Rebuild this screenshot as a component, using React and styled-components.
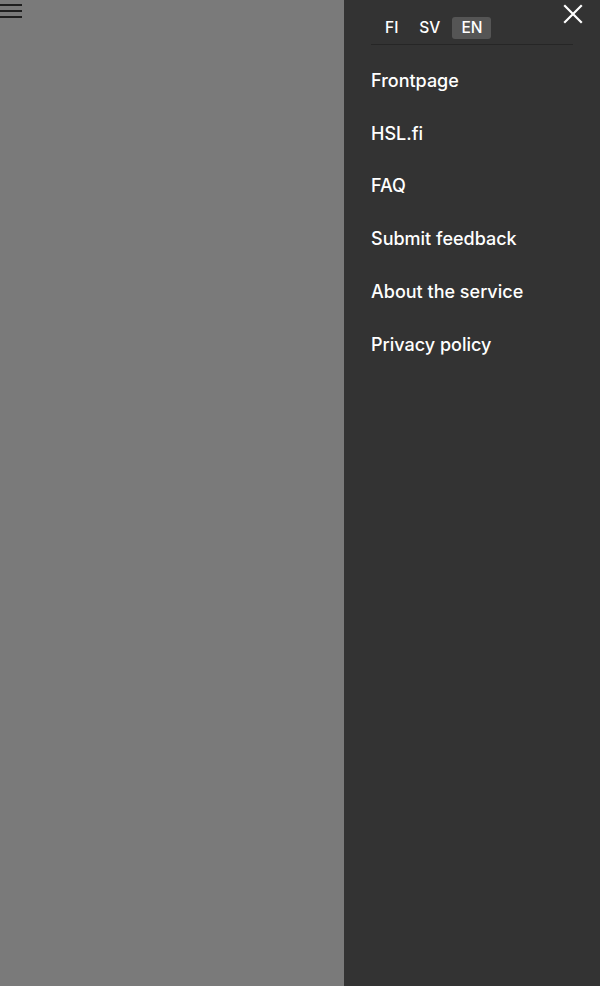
import styled, { createGlobalStyle } from "styled-components";

const GlobalStyle = createGlobalStyle`
  html, body {
    margin: 0;
    padding: 0;
    height: 100%;
  }
  body {
    font-family: Inter, "Noto Sans", sans-serif;
  }
  #root {
    height: 100%;
  }
`;

const languages = ["FI", "SV", "EN"];
const links = [
  "Frontpage",
  "HSL.fi",
  "FAQ",
  "Submit feedback",
  "About the service",
  "Privacy policy",
];

function App() {
  const current = "EN";

  return (
    <>
      <GlobalStyle />
      <Page>
        <Main>
          <MenuButton aria-label="Open menu">
            <span />
            <span />
            <span />
          </MenuButton>
        </Main>

        <Drawer>
          <Header>
            <Languages>
              {languages.map((lang) => (
                <LangButton key={lang} $active={lang === current}>
                  {lang}
                </LangButton>
              ))}
            </Languages>
            <CloseButton aria-label="Close menu">
              <svg width="20" height="20" viewBox="0 0 20 20">
                <path
                  d="M2 2 L18 18 M18 2 L2 18"
                  stroke="#fff"
                  strokeWidth="2.2"
                  strokeLinecap="square"
                />
              </svg>
            </CloseButton>
          </Header>
          <Divider />

          <Nav>
            {links.map((label) => (
              <NavLink key={label} href="#">
                {label}
              </NavLink>
            ))}
          </Nav>
        </Drawer>
      </Page>
    </>
  );
}

const Page = styled.div`
  display: flex;
  height: 100vh;
  overflow: hidden;
`;

const Main = styled.div`
  flex: 1;
  background-color: #7a7a7a;
`;

const MenuButton = styled.button`
  display: flex;
  flex-direction: column;
  gap: 4px;
  width: 22px;
  padding: 4px 0 0;
  margin: 0;
  border: 0;
  background: none;
  cursor: pointer;

  span {
    display: block;
    height: 2px;
    background-color: #1f1f1f;
  }
`;

const Drawer = styled.aside`
  width: 256px;
  box-sizing: border-box;
  padding: 0 27px;
  background-color: #333333;
  display: flex;
  flex-direction: column;
`;

const Header = styled.div`
  display: flex;
  justify-content: space-between;
  align-items: flex-start;
  padding-top: 4px;
`;

const Languages = styled.div`
  display: flex;
  gap: 3px;
  margin: 13px 0 0 5px;
`;

const LangButton = styled.button`
  height: 22px;
  padding: 0 9px;
  border: 0;
  border-radius: 3px;
  background-color: ${({ $active }) => ($active ? "#555555" : "transparent")};
  color: #ffffff;
  font-family: Inter, "Noto Sans", sans-serif;
  font-size: 15.5px;
  font-weight: 500;
  line-height: 22px;
  cursor: pointer;
`;

const CloseButton = styled.button`
  margin: 0 -10px 0 0;
  padding: 0;
  border: 0;
  background: none;
  cursor: pointer;
  line-height: 0;
`;

const Divider = styled.div`
  height: 1px;
  margin-top: 5px;
  background-color: #262626;
`;

const Nav = styled.nav`
  display: flex;
  flex-direction: column;
  padding-top: 9px;
`;

const NavLink = styled.a`
  display: flex;
  align-items: center;
  height: 52.8px;
  color: #ffffff;
  font-size: 18px;
  font-weight: 500;
  text-decoration: none;
`;

export default App;
